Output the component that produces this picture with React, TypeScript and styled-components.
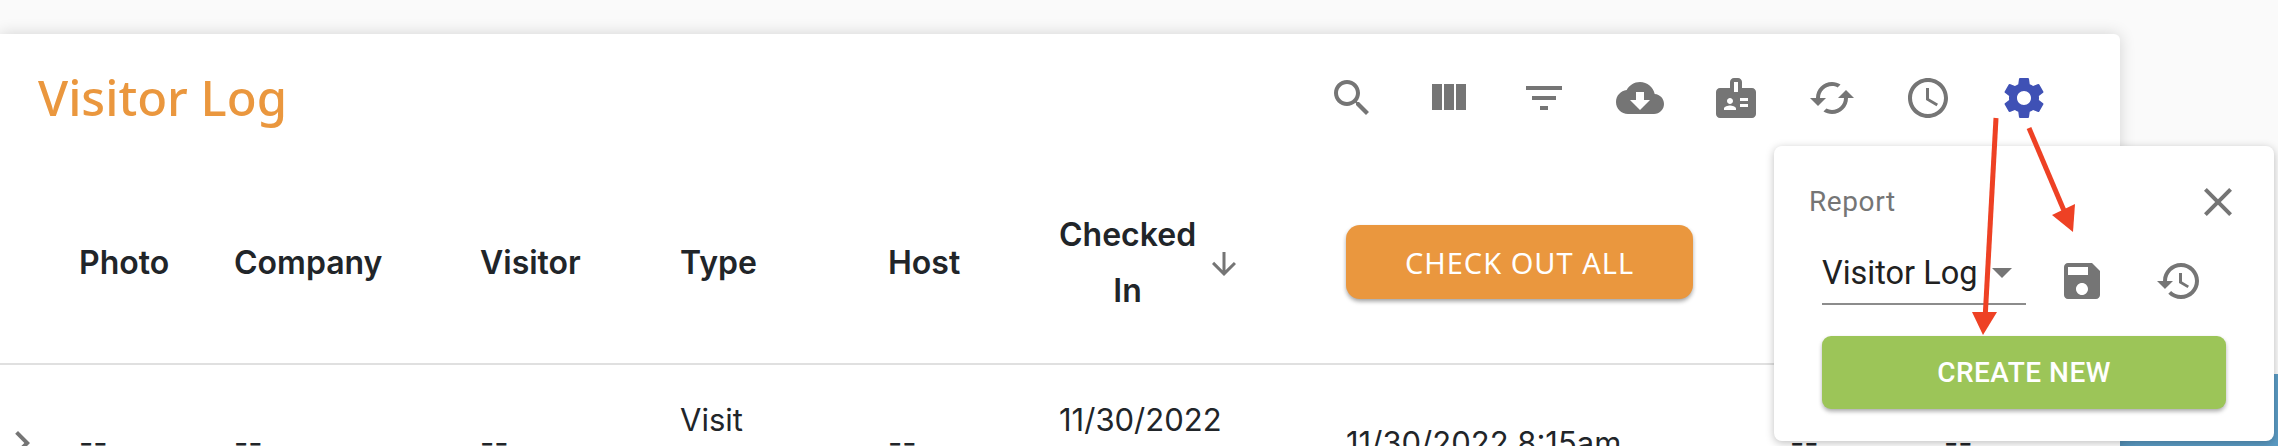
import React from "react";
import styled, { createGlobalStyle } from "styled-components";

const Global = createGlobalStyle`
  html, body { margin: 0; padding: 0; background: #fafafa; }
  #root { height: 446px; overflow: hidden; }
`;

const Page = styled.div`
  position: relative;
  display: flex;
  width: 2278px;
  height: 446px;
  padding-top: 34px;
  box-sizing: border-box;
  overflow: hidden;
  background: #fafafa;
`;

const Card = styled.section`
  flex: 0 0 2120px;
  height: 600px;
  background: #fff;
  border-radius: 0 6px 0 0;
  box-shadow: 0 0 16px rgba(0, 0, 0, 0.16);
  position: relative;
`;

const SideColumn = styled.div`
  flex: 1;
  padding-top: 340px;
`;

const SideBlock = styled.div`
  height: 100px;
  background: #5b9bc4;
`;

const Toolbar = styled.header`
  height: 131px;
  box-sizing: border-box;
  padding: 16px 48px 0 38px;
  display: flex;
  justify-content: space-between;
  align-items: flex-start;
`;

const Title = styled.h1`
  margin: 17px 0 0;
  font: 500 49px/60px "Noto Sans", Lato, sans-serif;
  color: #ea973e;
`;

const IconRow = styled.div`
  display: flex;
`;

const ToolButton = styled.span`
  display: flex;
  padding: 24px;
`;

const Glyph = styled.svg<{ $size?: number; $color?: string }>`
  display: block;
  flex: none;
  width: ${(p) => p.$size ?? 48}px;
  height: ${(p) => p.$size ?? 48}px;
  fill: ${(p) => p.$color ?? "#757575"};
`;

const columns = "79px 155px 246px 200px 208px 171px 287px 444px 154px 176px";

const HeadRow = styled.div`
  display: grid;
  grid-template-columns: ${columns};
  height: 198px;
  align-items: center;
  border-bottom: 2px solid #e0e0e0;
  font: 600 32px/56px Inter, sans-serif;
  color: #212529;
`;

const HeadCell = styled.div`
  margin-top: -2px;
  &:first-child {
    grid-column: 2;
  }
`;

const SortHead = styled.div`
  display: flex;
  align-items: center;
  width: 190px;
`;

const SortLabel = styled.div`
  flex: 0 0 137px;
  margin: -2px 10px 0 0;
  text-align: center;
`;

const CheckOut = styled.button`
  width: 347px;
  height: 74px;
  margin-bottom: 4px;
  border: 0;
  border-radius: 14px;
  background: #ea973e;
  color: #fff;
  font: 400 29px/1 "Noto Sans", sans-serif;
  letter-spacing: 1px;
  text-transform: uppercase;
  box-shadow: 0 3px 5px -1px rgba(0, 0, 0, 0.3), 0 2px 4px rgba(0, 0, 0, 0.14);
`;

const BodyRow = styled.div`
  display: grid;
  grid-template-columns: ${columns};
  height: 156px;
  align-items: center;
  font: 400 31px/46px Inter, sans-serif;
  color: #212529;
`;

const ExpandCell = styled.div`
  margin-left: -2px;
`;

const Popover = styled.aside`
  position: absolute;
  left: 1774px;
  top: 146px;
  width: 500px;
  height: 295px;
  box-sizing: border-box;
  padding: 32px 42px 0 35px;
  background: #fff;
  border-radius: 8px;
  box-shadow: 0 2px 8px rgba(0, 0, 0, 0.25);
  font-family: Roboto, sans-serif;
`;

const PopHead = styled.div`
  display: flex;
  justify-content: space-between;
  align-items: flex-start;
  height: 78px;
`;

const PopLabel = styled.span`
  padding-top: 3px;
  font-size: 28px;
  letter-spacing: 0.6px;
  line-height: 42px;
  color: #757575;
`;

const PopClose = styled.span`
  margin-right: -10px;
`;

const PopRow = styled.div`
  display: flex;
  align-items: flex-start;
  padding-left: 13px;
  height: 80px;
`;

const ReportSelect = styled.div`
  width: 204px;
  height: 47px;
  border-bottom: 2px solid #8c8c8c;
  display: flex;
  justify-content: space-between;
  font-size: 32.5px;
  line-height: 34px;
  color: #212121;
`;

const Caret = styled.span`
  display: flex;
  margin-top: -8px;
`;

const SaveSlot = styled.span`
  margin: 1px 49px 0 32px;
  display: flex;
`;

const HistorySlot = styled.span`
  display: flex;
  margin-top: 1px;
`;

const CreateNew = styled.button`
  display: block;
  width: 404px;
  height: 73px;
  margin: 0 0 0 13px;
  border: 0;
  border-radius: 9px;
  background: #9cc558;
  color: #fff;
  font: 500 28px/1 Roboto, sans-serif;
  letter-spacing: 0.5px;
  text-transform: uppercase;
  box-shadow: 0 3px 5px -1px rgba(0, 0, 0, 0.25), 0 2px 4px rgba(0, 0, 0, 0.14);
`;

const Overlay = styled.svg`
  position: absolute;
  left: 0;
  top: 0;
  width: 2278px;
  height: 446px;
  pointer-events: none;
`;

const P = {
  search:
    "M15.5 14h-.79l-.28-.27C15.41 12.59 16 11.11 16 9.5 16 5.91 13.09 3 9.5 3S3 5.91 3 9.5 5.91 16 9.5 16c1.61 0 3.09-.59 4.23-1.57l.27.28v.79l5 4.99L20.49 19l-4.99-5zm-6 0C7.01 14 5 11.99 5 9.5S7.01 5 9.5 5 14 7.01 14 9.5 11.99 14 9.5 14z",
  columns: "M10 18h5V5h-5v13zm-6 0h5V5H4v13zM16 5v13h5V5h-5z",
  filter: "M10 18h4v-2h-4v2zM3 6v2h18V6H3zm3 7h12v-2H6v2z",
  cloud:
    "M19.35 10.04C18.67 6.59 15.64 4 12 4 9.11 4 6.6 5.64 5.35 8.04 2.34 8.36 0 10.91 0 14c0 3.31 2.69 6 6 6h13c2.76 0 5-2.24 5-5 0-2.64-2.05-4.78-4.65-4.96zM17 13l-5 5-5-5h3V9h4v4h3z",
  badge:
    "M20 7h-5V4c0-1.1-.9-2-2-2h-2c-1.1 0-2 .9-2 2v3H4c-1.1 0-2 .9-2 2v11c0 1.1.9 2 2 2h16c1.1 0 2-.9 2-2V9c0-1.1-.9-2-2-2zM9 12c.83 0 1.5.67 1.5 1.5S9.83 15 9 15s-1.5-.67-1.5-1.5S8.17 12 9 12zm3 6H6v-.75c0-1 2-1.5 3-1.5s3 .5 3 1.5V18zm1-9h-2V4h2v5zm5 7.5h-4V15h4v1.5zm0-3h-4V12h4v1.5z",
  cached:
    "M19 8l-4 4h3c0 3.31-2.69 6-6 6-1.01 0-1.97-.25-2.8-.7l-1.46 1.46C8.97 19.54 10.43 20 12 20c4.42 0 8-3.58 8-8h3l-4-4zM6 12c0-3.31 2.69-6 6-6 1.01 0 1.97.25 2.8.7l1.46-1.46C15.03 4.46 13.57 4 12 4c-4.42 0-8 3.58-8 8H1l4 4 4-4H6z",
  clock:
    "M11.99 2C6.47 2 2 6.48 2 12s4.47 10 9.99 10C17.52 22 22 17.52 22 12S17.52 2 11.99 2zM12 20c-4.42 0-8-3.58-8-8s3.58-8 8-8 8 3.58 8 8-3.58 8-8 8zM12.5 7H11v6l5.25 3.15.75-1.23-4.5-2.67z",
  gear:
    "M19.43 12.98c.04-.32.07-.64.07-.98s-.03-.66-.07-.98l2.11-1.65c.19-.15.24-.42.12-.64l-2-3.46c-.12-.22-.39-.3-.61-.22l-2.49 1c-.52-.4-1.08-.73-1.69-.98l-.38-2.65C14.46 2.18 14.25 2 14 2h-4c-.25 0-.46.18-.49.42l-.38 2.65c-.61.25-1.17.59-1.69.98l-2.49-1c-.23-.09-.49 0-.61.22l-2 3.46c-.13.22-.07.49.12.64l2.11 1.65c-.04.32-.07.65-.07.98s.03.66.07.98l-2.11 1.65c-.19.15-.24.42-.12.64l2 3.46c.12.22.39.3.61.22l2.49-1c.52.4 1.08.73 1.69.98l.38 2.65c.03.24.24.42.49.42h4c.25 0 .46-.18.49-.42l.38-2.65c.61-.25 1.17-.59 1.69-.98l2.49 1c.23.09.49 0 .61-.22l2-3.46c.12-.22.07-.49-.12-.64l-2.11-1.65zM12 15.5c-1.93 0-3.5-1.57-3.5-3.5s1.57-3.5 3.5-3.5 3.5 1.57 3.5 3.5-1.57 3.5-3.5 3.5z",
  save: "M17 3H5c-1.11 0-2 .9-2 2v14c0 1.1.89 2 2 2h14c1.1 0 2-.9 2-2V7l-4-4zm-5 16c-1.66 0-3-1.34-3-3s1.34-3 3-3 3 1.34 3 3-1.34 3-3 3zm3-10H5V5h10v4z",
  history:
    "M13 3c-4.97 0-9 4.03-9 9H1l3.89 3.89.07.14L9 12H6c0-3.87 3.13-7 7-7s7 3.13 7 7-3.13 7-7 7c-1.93 0-3.68-.79-4.94-2.06l-1.42 1.42C8.27 19.99 10.51 21 13 21c4.97 0 9-4.03 9-9s-4.03-9-9-9zm-1 5v5l4.28 2.54.72-1.21-3.5-2.08V8H12z",
  close:
    "M19 6.41L17.59 5 12 10.59 6.41 5 5 6.41 10.59 12 5 17.59 6.41 19 12 13.41 17.59 19 19 17.59 13.41 12z",
  caret: "M7 10l5 5 5-5z",
  down: "M20 12l-1.41-1.41L13 16.17V4h-2v12.17l-5.58-5.59L4 12l8 8 8-8z",
  chevron: "M10 6L8.59 7.41 13.17 12l-4.58 4.59L10 18l6-6z",
};

const Icon = ({ d, size, color }: { d: string; size?: number; color?: string }) => (
  <Glyph viewBox="0 0 24 24" $size={size} $color={color}>
    <path d={d} />
  </Glyph>
);

const tools: { d: string; color?: string }[] = [
  { d: P.search },
  { d: P.columns },
  { d: P.filter },
  { d: P.cloud },
  { d: P.badge },
  { d: P.cached },
  { d: P.clock },
  { d: P.gear, color: "#3f51b5" },
];

export default function App() {
  return (
    <>
      <Global />
      <Page>
        <Card>
          <Toolbar>
            <Title>Visitor Log</Title>
            <IconRow>
              {tools.map((t) => (
                <ToolButton key={t.d}>
                  <Icon d={t.d} color={t.color} />
                </ToolButton>
              ))}
            </IconRow>
          </Toolbar>
          <HeadRow>
            <HeadCell>Photo</HeadCell>
            <HeadCell>Company</HeadCell>
            <HeadCell>Visitor</HeadCell>
            <HeadCell>Type</HeadCell>
            <HeadCell>Host</HeadCell>
            <SortHead>
              <SortLabel>Checked In</SortLabel>
              <Icon d={P.down} size={36} />
            </SortHead>
            <CheckOut>Check out all</CheckOut>
          </HeadRow>
          <BodyRow>
            <ExpandCell>
              <Icon d={P.chevron} />
            </ExpandCell>
            <div>--</div>
            <div>--</div>
            <div>--</div>
            <div>
              Visit
              <br />
              Scheduled
            </div>
            <div>--</div>
            <div>
              11/30/2022
              <br />
              8:15am
            </div>
            <div>11/30/2022 8:15am</div>
            <div>--</div>
            <div>--</div>
          </BodyRow>
        </Card>
        <SideColumn>
          <SideBlock />
        </SideColumn>
        <Popover>
          <PopHead>
            <PopLabel>Report</PopLabel>
            <PopClose>
              <Icon d={P.close} />
            </PopClose>
          </PopHead>
          <PopRow>
            <ReportSelect>
              Visitor Log
              <Caret>
                <Icon d={P.caret} />
              </Caret>
            </ReportSelect>
            <SaveSlot>
              <Icon d={P.save} />
            </SaveSlot>
            <HistorySlot>
              <Icon d={P.history} />
            </HistorySlot>
          </PopRow>
          <CreateNew>Create new</CreateNew>
        </Popover>
        <Overlay viewBox="0 0 2278 446">
          <path d="M1996 118L1985 320" stroke="#ee4124" strokeWidth="5" fill="none" />
          <path d="M1972 312L1997 312L1983 335Z" fill="#ee4124" />
          <path d="M2029 128L2065 213" stroke="#ee4124" strokeWidth="5" fill="none" />
          <path d="M2052 215L2075 204L2073 232Z" fill="#ee4124" />
        </Overlay>
      </Page>
    </>
  );
}
